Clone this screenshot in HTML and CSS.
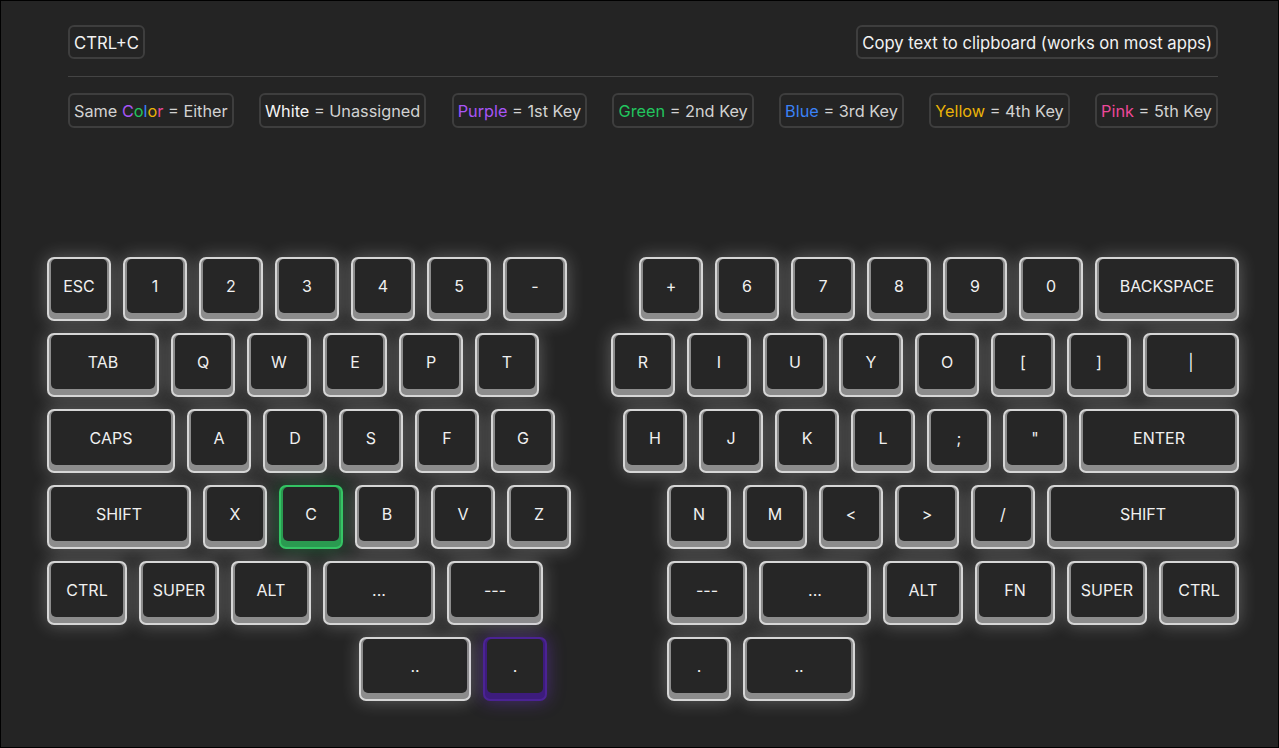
FILE: index.html
```html
<!DOCTYPE html>
<html>
<head>
<meta charset="utf-8">
<title>Keyboard</title>
<link rel="stylesheet" href="styles.css">
</head>
<body>
<div class="frame">
  <div class="header">
    <div class="toprow">
      <div class="box strong">CTRL+C</div>
      <div class="box strong">Copy text to clipboard (works on most apps)</div>
    </div>
    <div class="divider"></div>
    <div class="legend">
      <div class="box">Same <span class="c-purple">C</span><span class="c-green">o</span><span class="c-blue">l</span><span class="c-yellow">o</span><span class="c-pink">r</span> = Either</div>
      <div class="box"><span class="c-white">White</span> = Unassigned</div>
      <div class="box"><span class="c-purple">Purple</span> = 1st Key</div>
      <div class="box"><span class="c-green">Green</span> = 2nd Key</div>
      <div class="box"><span class="c-blue">Blue</span> = 3rd Key</div>
      <div class="box"><span class="c-yellow">Yellow</span> = 4th Key</div>
      <div class="box"><span class="c-pink">Pink</span> = 5th Key</div>
    </div>
  </div>

  <div class="keyboard">
    <div class="half left">
      <div class="row">
        <div class="key"><span>ESC</span></div>
        <div class="key"><span>1</span></div>
        <div class="key"><span>2</span></div>
        <div class="key"><span>3</span></div>
        <div class="key"><span>4</span></div>
        <div class="key"><span>5</span></div>
        <div class="key"><span>-</span></div>
      </div>
      <div class="row">
        <div class="key w175"><span>TAB</span></div>
        <div class="key"><span>Q</span></div>
        <div class="key"><span>W</span></div>
        <div class="key"><span>E</span></div>
        <div class="key"><span>P</span></div>
        <div class="key"><span>T</span></div>
      </div>
      <div class="row">
        <div class="key w2"><span>CAPS</span></div>
        <div class="key"><span>A</span></div>
        <div class="key"><span>D</span></div>
        <div class="key"><span>S</span></div>
        <div class="key"><span>F</span></div>
        <div class="key"><span>G</span></div>
      </div>
      <div class="row">
        <div class="key w225"><span>SHIFT</span></div>
        <div class="key"><span>X</span></div>
        <div class="key green"><span>C</span></div>
        <div class="key"><span>B</span></div>
        <div class="key"><span>V</span></div>
        <div class="key"><span>Z</span></div>
      </div>
      <div class="row">
        <div class="key w125"><span>CTRL</span></div>
        <div class="key w125"><span>SUPER</span></div>
        <div class="key w125"><span>ALT</span></div>
        <div class="key w175"><span>...</span></div>
        <div class="key w15"><span>---</span></div>
      </div>
      <div class="row thumb-left">
        <div class="key w175"><span>..</span></div>
        <div class="key purple"><span>.</span></div>
      </div>
    </div>

    <div class="half right">
      <div class="row">
        <div class="key"><span>+</span></div>
        <div class="key"><span>6</span></div>
        <div class="key"><span>7</span></div>
        <div class="key"><span>8</span></div>
        <div class="key"><span>9</span></div>
        <div class="key"><span>0</span></div>
        <div class="key w225"><span>BACKSPACE</span></div>
      </div>
      <div class="row">
        <div class="key"><span>R</span></div>
        <div class="key"><span>I</span></div>
        <div class="key"><span>U</span></div>
        <div class="key"><span>Y</span></div>
        <div class="key"><span>O</span></div>
        <div class="key"><span>[</span></div>
        <div class="key"><span>]</span></div>
        <div class="key w15"><span>|</span></div>
      </div>
      <div class="row">
        <div class="key"><span>H</span></div>
        <div class="key"><span>J</span></div>
        <div class="key"><span>K</span></div>
        <div class="key"><span>L</span></div>
        <div class="key"><span>;</span></div>
        <div class="key"><span>"</span></div>
        <div class="key w25"><span>ENTER</span></div>
      </div>
      <div class="row">
        <div class="key"><span>N</span></div>
        <div class="key"><span>M</span></div>
        <div class="key"><span>&lt;</span></div>
        <div class="key"><span>&gt;</span></div>
        <div class="key"><span>/</span></div>
        <div class="key w3"><span>SHIFT</span></div>
      </div>
      <div class="row">
        <div class="key w125"><span>---</span></div>
        <div class="key w175"><span>...</span></div>
        <div class="key w125"><span>ALT</span></div>
        <div class="key w125"><span>FN</span></div>
        <div class="key w125"><span>SUPER</span></div>
        <div class="key w125"><span>CTRL</span></div>
      </div>
      <div class="row thumb-right">
        <div class="key"><span>.</span></div>
        <div class="key w175"><span>..</span></div>
      </div>
    </div>
  </div>
</div>
</body>
</html>
```

FILE: styles.css
```css
html, body {
  margin: 0;
  padding: 0;
  background: #242424;
}

body {
  font-family: Inter, "Noto Sans", "Liberation Sans", sans-serif;
  font-size: 16px;
}

.frame {
  box-sizing: border-box;
  width: 1279px;
  height: 748px;
  border: 1px solid #000;
  background: #242424;
  overflow: hidden;
}

.header {
  width: 1150px;
  margin: 24px 0 0 67px;
}

.toprow {
  display: flex;
  justify-content: space-between;
}

.box {
  border: 2px solid #3e3e3e;
  border-radius: 6px;
  padding: 6px 4px 4px;
  line-height: 20px;
  color: #d2d2d2;
  white-space: nowrap;
}

.box.strong {
  color: #f2f2f2;
  font-size: 16.67px;
}

.divider {
  height: 1px;
  background: #444;
  margin-top: 17px;
}

.legend {
  display: flex;
  justify-content: space-between;
  margin-top: 16px;
}

.legend .box {
  font-size: 16.3px;
  line-height: 21px;
}

.c-purple { color: #a855f7; }
.c-green { color: #22c55e; }
.c-blue { color: #3b82f6; }
.c-yellow { color: #eab308; }
.c-pink { color: #ec4899; }
.c-white { color: #f5f5f5; }

.keyboard {
  display: flex;
  justify-content: space-between;
  width: 1192px;
  margin: 129px 0 0 46px;
}

.half {
  display: flex;
  flex-direction: column;
  gap: 12px;
}

.half.left { align-items: flex-start; }
.half.right { align-items: flex-end; }

.row {
  display: flex;
  gap: 12px;
}

.thumb-left { margin-left: 312px; }
.thumb-right { align-self: flex-start; margin-left: 56px; }

.key {
  box-sizing: border-box;
  width: 64px;
  height: 64px;
  border: 2px solid #d6d6d6;
  border-radius: 7px;
  background: #8c8c8c;
  padding: 0 2px 6px;
  box-shadow: 0 0 18px rgba(255, 255, 255, 0.28);
}

.key span {
  display: flex;
  align-items: center;
  justify-content: center;
  height: 100%;
  background: #262626;
  border-radius: 5px;
  color: #f0f0f0;
  font-size: 16px;
}

.w125 { width: 80px; }
.w15 { width: 96px; }
.w175 { width: 112px; }
.w2 { width: 128px; }
.w225 { width: 144px; }
.w25 { width: 160px; }
.w3 { width: 192px; }

.key.green {
  border-color: #33c463;
  background: #2a9a50;
  box-shadow: 0 0 18px rgba(34, 197, 94, 0.35);
}

.key.purple {
  border-color: #4b2394;
  background: #3d1c7c;
  box-shadow: 0 0 18px rgba(124, 58, 237, 0.4);
}
```
